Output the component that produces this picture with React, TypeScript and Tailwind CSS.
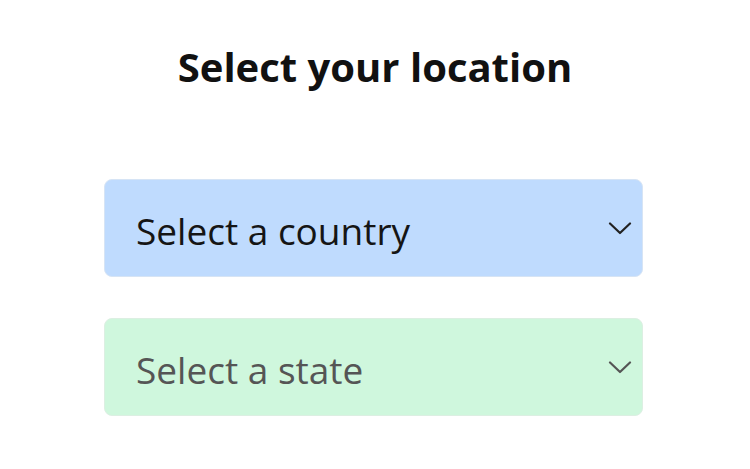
import React from "react";

function Chevron({ color }: { color: string }) {
  return (
    <svg width="24" height="13" viewBox="0 0 24 13" fill="none" className="shrink-0">
      <polyline points="2,1.5 12,11 22,1.5" stroke={color} strokeWidth="2.2" strokeLinecap="round" strokeLinejoin="round" />
    </svg>
  );
}

export default function App() {
  return (
    <div
      className="w-[750px] h-[469px] bg-white flex flex-col items-center"
      style={{ fontFamily: '"Open Sans", "Noto Sans", sans-serif' }}
    >
      <h1 className="mt-[38px] text-[40px] leading-[58px] font-bold text-[#111]">
        Select your location
      </h1>
      <div className="mt-[83px] mr-[3px] w-[539px] flex flex-col gap-[41px]">
        <div className="h-[98px] rounded-[8px] bg-[#bfdbfe] border border-[#d6e4f5] flex items-center justify-between pl-[31px] pr-[10px]">
          <span className="text-[37px] text-[#151515] pt-[6px]">Select a country</span>
          <Chevron color="#222" />
        </div>
        <div className="h-[98px] rounded-[8px] bg-[#cff7dd] border border-[#dcefe2] flex items-center justify-between pl-[31px] pr-[10px]">
          <span className="text-[37px] text-[#555] pt-[6px]">Select a state</span>
          <Chevron color="#555" />
        </div>
      </div>
    </div>
  );
}
